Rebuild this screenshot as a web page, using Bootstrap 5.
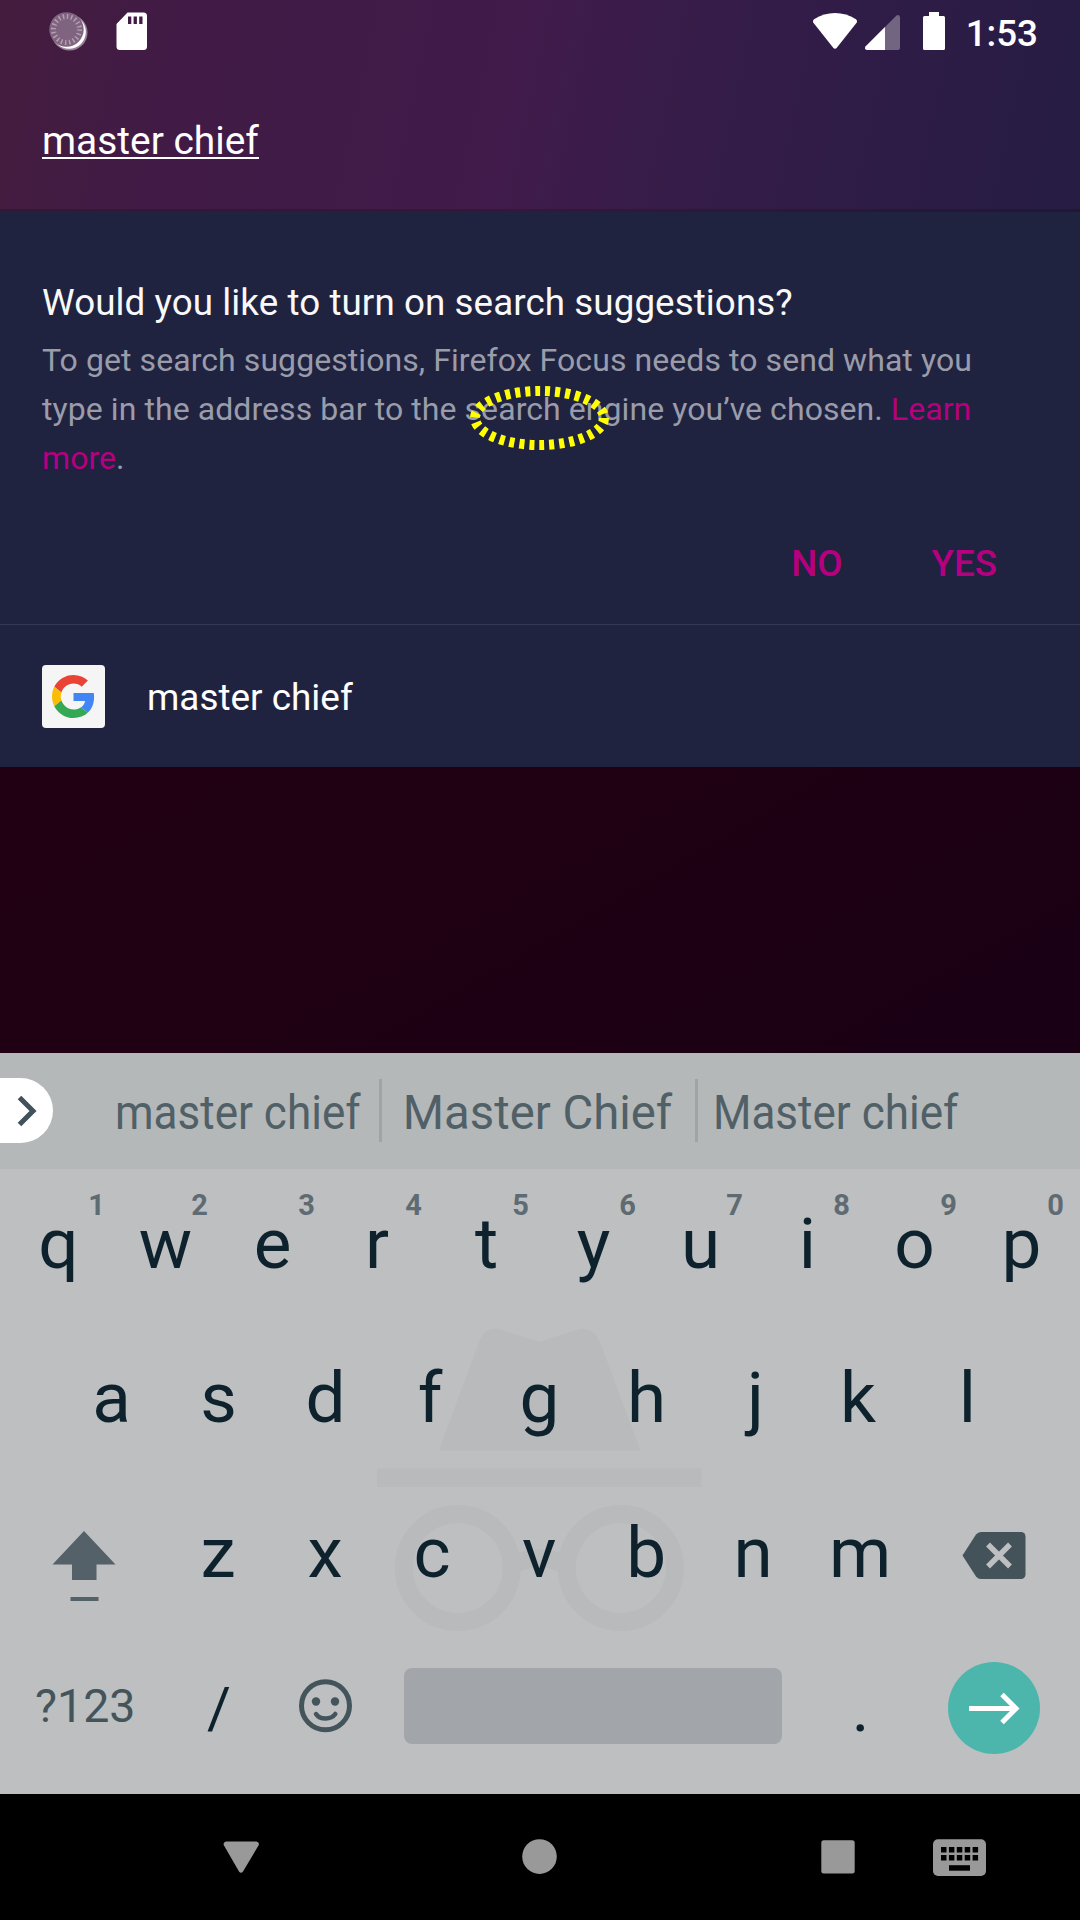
<!DOCTYPE html>
<html lang="en">
<head>
<meta charset="utf-8">
<meta name="viewport" content="width=device-width, initial-scale=1">
<title>Firefox Focus search</title>
<link href="https://cdn.jsdelivr.net/npm/bootstrap@5.3.0/dist/css/bootstrap.min.css" rel="stylesheet">
<style>
body{font-family:Roboto,sans-serif;background:#000}
.screen{width:1080px;height:1920px}
.top-area{height:209px;background:linear-gradient(102deg,#441c3e 0%,#411b45 16%,#401b4b 48%,#381c49 60%,#2f1c47 78%,#261c43 100%)}
.status-bar{height:63px;padding:0 42px 0 49px}
.clock{font-size:36.75px;font-weight:500;line-height:67px}
.url-text{margin:56px 0 0 42px;font-size:38.9px;line-height:44px;height:40px;width:max-content;border-bottom:2px solid #fff}
.edge-line{height:3px;background:linear-gradient(90deg,#331936,#331837 50%,#211737)}
.prompt{height:412px;background:#202340;padding:66px 42px 0;color:#f9f9fa}
.prompt h1{font-size:36.75px;line-height:50px;font-weight:400;letter-spacing:.08px;white-space:nowrap}
.prompt p{font-size:32px;line-height:49px;letter-spacing:.07px;color:#9a9caa;white-space:nowrap}
.prompt a,.choice{color:#b5007f;text-decoration:none}
.choice{font-size:36.75px;font-weight:500;line-height:50px}
.choices{margin-top:56px;gap:89px;padding-right:41px}
.mark-ring{left:464px;top:380px}
.result{height:143px;background:#202340;border-top:1px solid #353852;padding:0 42px;gap:42px}
.result-text{font-size:36.9px;line-height:44px;padding-top:4px}
.engine{width:63px;height:63px;border-radius:4px;background:#f5f5f5}
.backdrop{height:286px;background:linear-gradient(150deg,#220013,#1e0014 60%,#190014)}
.strip{height:116px;background:#b4b8b9;color:#506066;font-size:47.25px}
.pill{width:53px;height:65px;border-radius:0 33px 33px 0;background:#fff;margin:0 44px 1px 0}
.word{padding-top:4px;line-height:60px;white-space:nowrap}
.word-a{width:282px}.word-b{width:313px;padding-right:2px}.word-c{width:275px}
.condensed{transform:scaleX(.932)}
.bar-line{width:3px;height:63px;margin-bottom:2px;background:#9fa4a5}
.keys{height:625px;background:#bdbfc1;color:#0d222c;padding:0 5px 7px 5px}
.ghost{left:377px;top:190px}
.key{width:107px;font-size:71px;line-height:84px}
.key-wide{width:160.5px}
.key-r,.key-f,.key-k{padding-right:5px}
.key-j{padding-left:4px}
.hint{right:11px;top:17px;font-size:29px;font-weight:700;line-height:38px;color:#5f6b72}
.key-q .hint{right:7px}
.r1{height:150px}.r2{height:157px;padding-right:1px}.r3{height:153px;margin-left:-.8px}.r4{height:158px}
.num{font-size:46.5px;color:#44545b;padding-bottom:2px}
.slash{font-size:58px}
.dot{font-size:67px}
.space-bar{width:378px;height:76px;border-radius:8px;background:#a2a6ab;margin:0 25.5px 4px 24px}
.enter{width:92px;height:92px;background:#4db6ac}
.nav-keys{height:126px;background:#000}
svg{display:block;flex:none}
</style>
<script src="https://cdn.jsdelivr.net/npm/bootstrap@5.3.0/dist/js/bootstrap.bundle.min.js"></script>
</head>
<body>
<div class="screen d-flex flex-column overflow-hidden position-relative">
<header class="top-area text-white">
 <div class="status-bar d-flex justify-content-between">
  <svg width="110" height="63" viewBox="49 0 110 63">
   <circle cx="69.500" cy="32.500" r="18" fill="#fff" opacity=".45"/>
   <circle cx="69" cy="32" r="16.800" fill="#fff"/>
   <circle cx="66.500" cy="29.500" r="17.200" fill="#80647f"/>
   <circle cx="66.500" cy="29.500" r="13" fill="none" stroke="#b3a1b3" stroke-width="5" stroke-dasharray="1.400 2.684"/>
   <path d="M127.500 12.500H143.500a3.500 3.500 0 0 1 3.500 3.500V46.500a3.500 3.500 0 0 1-3.500 3.500H120a3.500 3.500 0 0 1-3.500-3.500V24Z" fill="#fff"/>
   <path d="M128 16.500h3.300v7.500H128zM133.600 16.500h3.300v7.500h-3.300zM139.200 16.500h3.300v7.500h-3.300z" fill="#421c44"/>
  </svg>
  <div class="d-flex">
   <svg width="154" height="63" viewBox="812 0 154 63" fill="#fff">
    <path d="M813.200 22.500Q812.300 20.500 814 19.300Q824 13 835 13T856 19.300Q857.700 20.500 856.800 22.500L837 47.500Q835 50 833 47.500Z"/>
    <path d="M900 17.500V48a2 2 0 0 1-2 2H867q-3-.5-1.500-3.500L896.500 15.500q3-1.500 3.500 2Z" opacity=".32"/>
    <path d="M885 27V50H867q-3-.5-1.500-3.500Z"/>
    <path d="M929 12h10v4h4.500a1.500 1.500 0 0 1 1.500 1.500V48.500a1.500 1.500 0 0 1-1.500 1.500H924.500a1.500 1.500 0 0 1-1.500-1.500V17.500a1.500 1.500 0 0 1 1.500-1.500H929Z"/>
   </svg>
   <div class="clock">1:53</div>
  </div>
 </div>
 <div class="url-text">master chief</div>
</header>
<div class="edge-line"></div>
<main class="prompt">
 <h1 class="m-0">Would you like to turn on search suggestions?</h1>
 <p class="mt-2 mb-0">To get search suggestions, Firefox Focus needs to send what you<br>type in the address bar to the search engine you’ve chosen. <a href="#">Learn</a><br><a href="#">more</a>.</p>
 <div class="choices d-flex justify-content-end"><button class="choice btn p-0 border-0">NO</button><button class="choice btn p-0 border-0">YES</button></div>
</main>
<svg class="mark-ring position-absolute" width="152" height="76" viewBox="464 380 152 76"><ellipse cx="539.500" cy="418" rx="64.500" ry="27" fill="none" stroke="#ff0" stroke-width="10" stroke-dasharray="5 5"/></svg>
<section class="result d-flex align-items-center text-white">
 <div class="engine d-flex align-items-center justify-content-center">
  <svg width="43" height="43" viewBox="0 0 48 48">
   <path fill="#ea4335" d="M24 9.500c3.540 0 6.710 1.220 9.210 3.600l6.850-6.850C35.900 2.380 30.470 0 24 0 14.620 0 6.510 5.380 2.560 13.220l7.980 6.190C12.430 13.720 17.740 9.500 24 9.500z"/>
   <path fill="#4285f4" d="M46.980 24.550c0-1.570-.15-3.090-.38-4.550H24v9.020h12.940c-.58 2.960-2.260 5.480-4.780 7.180l7.730 6c4.510-4.180 7.090-10.360 7.090-17.650z"/>
   <path fill="#fbbc05" d="M10.530 28.590c-.48-1.450-.76-2.990-.76-4.590s.27-3.140.76-4.590l-7.980-6.190C.92 16.460 0 20.120 0 24c0 3.880.92 7.540 2.560 10.780l7.970-6.190z"/>
   <path fill="#34a853" d="M24 48c6.480 0 11.930-2.130 15.890-5.810l-7.730-6c-2.150 1.450-4.920 2.300-8.160 2.300-6.260 0-11.570-4.220-13.470-9.910l-7.980 6.190C6.510 42.620 14.620 48 24 48z"/>
  </svg>
 </div>
 <div class="result-text">master chief</div>
</section>
<div class="backdrop"></div>
<div class="strip d-flex align-items-center">
 <div class="pill"><svg width="53" height="65" viewBox="0 1078 53 65"><path d="M19.500 1097.500L33 1111L19.500 1124.500" fill="none" stroke="#41525a" stroke-width="5"/></svg></div>
 <div class="word word-a d-flex justify-content-center"><span class="condensed">master chief</span></div>
 <div class="bar-line"></div>
 <div class="word word-b d-flex justify-content-center"><span>Master Chief</span></div>
 <div class="bar-line"></div>
 <div class="word word-c d-flex justify-content-center"><span class="condensed">Master chief</span></div>
</div>
<div class="keys position-relative">
 <svg class="ghost position-absolute" width="324" height="280" viewBox="377 1359 324 280" overflow="visible">
  <g fill="#b8babb">
   <path d="M439 1450.500L479 1342Q486 1325 502 1330L539.500 1342L576 1330Q592 1325 600 1342L640.500 1450.500Z"/>
   <path d="M377 1468.500h324.500v18.500H377z"/>
  </g>
  <g fill="none" stroke="#b8babb" stroke-width="18"><circle cx="457.800" cy="1568" r="54"/><circle cx="620.800" cy="1568" r="54"/><path d="M512 1565.500Q539.500 1551 567 1565.500"/></g>
 </svg>
 <div class="r1 d-flex position-relative" id="row1"></div>
 <div class="r2 d-flex justify-content-center position-relative" id="row2"></div>
 <div class="r3 d-flex align-items-center position-relative">
  <div class="key-wide d-flex justify-content-center"><svg width="64" height="80" viewBox="53 1513 64 80" overflow="visible" fill="#546168"><path d="M85 1531L116.500 1564.500H97.500V1580H73V1564.500H53.500ZM71.500 1597h28v4h-28z"/></svg></div>
  <div class="d-flex" id="row3"></div>
  <div class="key-wide d-flex justify-content-center"><svg width="64" height="48" viewBox="963 1529 64 48" overflow="visible"><path d="M963.500 1555.500L977 1534.500Q979 1532 982 1532H1022a4.500 4.500 0 0 1 4.500 4.500V1574.500a4.500 4.500 0 0 1-4.500 4.500H982Q979 1579 977 1576.500Z" fill="#44525a"/><path d="M989 1544.500L1011 1566.500M1011 1544.500L989 1566.500" stroke="#bdbfc1" stroke-width="5.500"/></svg></div>
 </div>
 <div class="r4 d-flex align-items-center position-relative">
  <div class="key-wide num text-center">?123</div>
  <div class="key slash text-center">/</div>
  <div class="key d-flex justify-content-center"><svg width="54" height="54" viewBox="299 1681 54 54" overflow="visible" fill="none" stroke="#44545b"><circle cx="325.500" cy="1705.700" r="24" stroke-width="5"/><path d="M316 1714Q319 1718.500 325.500 1718.500T335.300 1714" stroke-width="4.500" stroke-linecap="round"/><g fill="#44545b" stroke="none"><circle cx="316" cy="1701.500" r="4.200"/><circle cx="335" cy="1701.500" r="4.200"/></g></svg></div>
  <div class="space-bar"></div>
  <div class="key dot text-center">.</div>
  <div class="key-wide d-flex justify-content-center"><div class="enter rounded-circle"><svg width="92" height="92" viewBox="948 1662 92 92" fill="none" stroke="#fff" stroke-width="5"><path d="M969 1708.500H1016M1002 1694.500L1016 1708.500L1002 1722.500"/></svg></div></div>
 </div>
</div>
<footer class="nav-keys">
 <svg width="1080" height="126" viewBox="0 1794 1080 126" fill="#999">
  <path d="M226 1841.500H256.500Q260 1842.500 258.500 1845.500L243 1871.500Q241 1874 239 1871.500L224 1845.500Q222.500 1842.500 226 1841.500Z"/>
  <circle cx="539.500" cy="1856.600" r="17.300"/>
  <rect x="821.300" y="1840.300" width="33.400" height="33.300" rx="2.500"/>
  <rect x="933" y="1839.300" width="53" height="36.700" rx="5"/>
  <path stroke="#000" stroke-width="5.500" stroke-dasharray="5.500 2.400" d="M941 1849.700h38M941 1857.700h38"/>
  <path fill="#000" d="M949 1865.200h21v5.500h-21z"/>
 </svg>
</footer>
</div>
<script>
const letter=(c,n)=>`<div class="key key-${c} position-relative d-flex align-items-center justify-content-center">${c}${n===undefined?'':`<span class="hint position-absolute">${n}</span>`}</div>`;
row1.innerHTML=[...'qwertyuiop'].map((c,i)=>letter(c,(i+1)%10)).join('');
row2.innerHTML=[...'asdfghjkl'].map(c=>letter(c)).join('');
row3.innerHTML=[...'zxcvbnm'].map(c=>letter(c)).join('');
</script>
</body>
</html>
